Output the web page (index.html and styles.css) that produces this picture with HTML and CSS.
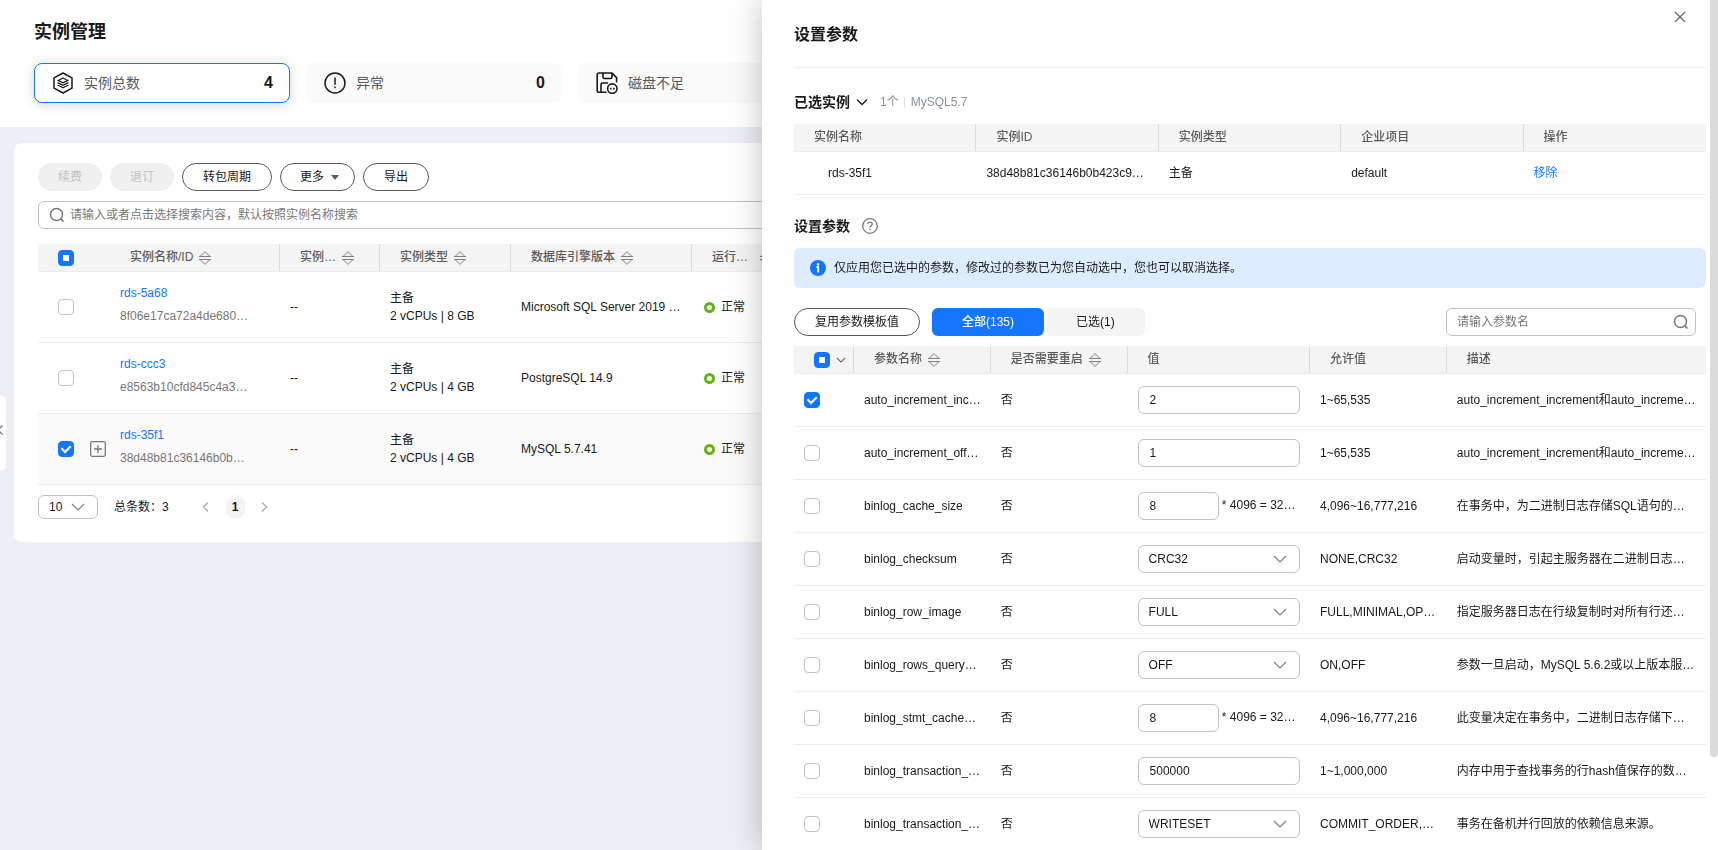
FILE: index.html
```html
<!DOCTYPE html>
<html lang="zh-CN">
<head>
  <meta charset="UTF-8">
  <meta name="viewport" content="width=device-width, initial-scale=1.0">
  <title>实例管理</title>
  <link rel="stylesheet" href="styles.css">
</head>
<body>

  <!-- Shared icons -->
  <svg class="sprite" aria-hidden="true">
    <symbol id="sort" viewBox="0 0 12 14">
      <path d="M1 5.5 L6 0.7 L11 5.5 M1 8.5 L6 13.3 L11 8.5" fill="none" stroke="#b0b0b0" stroke-width="1.2"/>
      <path d="M0 5.5 H12 M0 8.5 H12" fill="none" stroke="#808080"/>
    </symbol>
    <symbol id="search" viewBox="0 0 16 16">
      <circle cx="7.5" cy="7.5" r="6" fill="none" stroke="currentColor" stroke-width="1.5"/>
      <path d="M11.8 11.8 L14.5 14.5" fill="none" stroke="currentColor" stroke-width="1.7"/>
    </symbol>
    <symbol id="down" viewBox="0 0 12 12">
      <path d="M1 3.5 L6 8.5 L11 3.5" fill="none" stroke="currentColor" stroke-width="1.3"/>
    </symbol>
  </svg>

  <main class="page">
    <header class="page-header">
      <h1>实例管理</h1>
      <div class="stats">
        <div class="stat active">
          <svg class="stat-icon" viewBox="0 0 22 22" fill="none" stroke="#191919">
            <path d="M11 1 L20 5.8 V16.2 L11 21 L2 16.2 V5.8 Z" stroke-width="1.5" stroke-linejoin="round"/>
            <path d="M11 6 L15.8 8.4 L11 10.8 L6.2 8.4 Z M5.6 10.6 L11 13.4 L16.4 10.6 M5.6 13 L11 15.8 L16.4 13" stroke-width="1.2"/>
          </svg>
          <span>实例总数</span>
          <b>4</b>
        </div>
        <div class="stat">
          <svg class="stat-icon" viewBox="0 0 22 22" fill="none" stroke="#191919" stroke-width="1.5">
            <circle cx="11" cy="11" r="10"/>
            <path d="M11 5.5 V12.8 M11 14.6 V16.2"/>
          </svg>
          <span>异常</span>
          <b>0</b>
        </div>
        <div class="stat">
          <svg class="stat-icon" viewBox="0 0 22 22" fill="none" stroke="#191919" stroke-width="1.6">
            <path d="M10.5 20.2 H3 Q1.2 20.2 1.2 18.4 V2.8 Q1.2 1 3 1 H16 L20.6 5.6 V10.5"/>
            <path d="M7 1 V5 Q7 6.5 8.5 6.5 H14.5 Q16 6.5 16 5 V1"/>
            <path d="M5 20 V12.5 Q5 11 6.5 11 H12"/>
            <circle cx="16.3" cy="16.6" r="4.7"/>
            <path d="M14 16.6 H15.6 M17 16.6 H18.6"/>
          </svg>
          <span>磁盘不足</span>
        </div>
      </div>
    </header>

    <section class="panel">
      <div class="toolbar">
        <button class="btn" disabled>续费</button>
        <button class="btn" disabled>退订</button>
        <button class="btn">转包周期</button>
        <button class="btn more">更多 <i class="caret"></i></button>
        <button class="btn">导出</button>
      </div>
      <div class="searchbar">
        <svg class="icon16"><use href="#search"/></svg>
        <input type="text" aria-label="搜索" placeholder="请输入或者点击选择搜索内容，默认按照实例名称搜索">
      </div>

      <table class="instances">
        <colgroup>
          <col class="w-check"><col class="w-name"><col class="w-note"><col class="w-type"><col class="w-engine"><col class="w-state"><col>
        </colgroup>
        <thead>
          <tr>
            <th class="check"><input type="checkbox" class="partial" aria-label="全选"></th>
            <th>实例名称/ID<svg class="sort"><use href="#sort"/></svg></th>
            <th>实例…<svg class="sort"><use href="#sort"/></svg></th>
            <th>实例类型<svg class="sort"><use href="#sort"/></svg></th>
            <th>数据库引擎版本<svg class="sort"><use href="#sort"/></svg></th>
            <th class="state">运行…<svg class="sort"><use href="#sort"/></svg></th>
            <th></th>
          </tr>
        </thead>
        <tbody>
          <tr>
            <td class="check"><input type="checkbox" aria-label="rds-5a68"></td>
            <td class="name"><a href="#">rds-5a68</a><span>8f06e17ca72a4de680…</span></td>
            <td>--</td>
            <td>主备<br>2 vCPUs | 8 GB</td>
            <td>Microsoft SQL Server 2019 …</td>
            <td><i class="dot"></i>正常</td>
            <td></td>
          </tr>
          <tr>
            <td class="check"><input type="checkbox" aria-label="rds-ccc3"></td>
            <td class="name"><a href="#">rds-ccc3</a><span>e8563b10cfd845c4a3…</span></td>
            <td>--</td>
            <td>主备<br>2 vCPUs | 4 GB</td>
            <td>PostgreSQL 14.9</td>
            <td><i class="dot"></i>正常</td>
            <td></td>
          </tr>
          <tr class="selected">
            <td class="check">
              <div class="check-row">
                <input type="checkbox" aria-label="rds-35f1" checked>
                <button class="expand" aria-label="展开">
                  <svg viewBox="0 0 16 16" fill="none" stroke="#777" stroke-width="1.3"><rect x="0.7" y="0.7" width="14.6" height="14.6" rx="1.5"/><path d="M4 8 H12 M8 4 V12"/></svg>
                </button>
              </div>
            </td>
            <td class="name"><a href="#">rds-35f1</a><span>38d48b81c36146b0b…</span></td>
            <td>--</td>
            <td>主备<br>2 vCPUs | 4 GB</td>
            <td>MySQL 5.7.41</td>
            <td><i class="dot"></i>正常</td>
            <td></td>
          </tr>
        </tbody>
      </table>

      <div class="pager">
        <select aria-label="每页条数"><option>10</option></select>
        <span class="total">总条数：3</span>
        <button class="page-btn" aria-label="上一页"><svg viewBox="0 0 12 12"><path d="M8 1.5 L3.5 6 L8 10.5"/></svg></button>
        <button class="page-btn current">1</button>
        <button class="page-btn" aria-label="下一页"><svg viewBox="0 0 12 12"><path d="M4 1.5 L8.5 6 L4 10.5"/></svg></button>
      </div>
    </section>
  </main>

  <button class="side-handle" aria-label="收起">
    <svg viewBox="0 0 3 12"><path d="M2.5 1.5 L-2 6 L2.5 10.5" fill="none" stroke="#777" stroke-width="1.3"/></svg>
  </button>

  <!-- Parameter drawer -->
  <aside class="drawer">
    <button class="close" aria-label="关闭">
      <svg viewBox="0 0 12 12"><path d="M1 1 L11 11 M11 1 L1 11" fill="none" stroke="#6b6b6b" stroke-width="1.4"/></svg>
    </button>
    <div class="drawer-body">
      <h2>设置参数</h2>

      <div class="section-title">
        <h3>已选实例</h3>
        <svg class="fold"><use href="#down"/></svg>
        <span class="summary">1个</span><i class="bar"></i><span class="summary">MySQL5.7</span>
      </div>
      <table class="chosen">
        <thead>
          <tr><th>实例名称</th><th>实例ID</th><th>实例类型</th><th>企业项目</th><th>操作</th></tr>
        </thead>
        <tbody>
          <tr><td>rds-35f1</td><td>38d48b81c36146b0b423c9…</td><td>主备</td><td>default</td><td><a href="#">移除</a></td></tr>
        </tbody>
      </table>

      <div class="section-title second">
        <h3>设置参数</h3>
        <svg class="help" viewBox="0 0 16 16" fill="none" stroke="#777" stroke-width="1.3">
          <circle cx="8" cy="8" r="7.3"/>
          <path d="M5.8 6.3 Q5.8 4.2 8 4.2 Q10.2 4.2 10.2 6.1 Q10.2 7.2 9 7.9 Q8 8.5 8 9.6 M8 10.8 V12.1"/>
        </svg>
      </div>

      <div class="alert">
        <svg class="icon16" viewBox="0 0 16 16">
          <circle cx="8" cy="8" r="8" fill="#1476ff"/>
          <circle cx="8" cy="4.3" r="1.2" fill="#fff"/>
          <path d="M6.4 7 H8.2 V12.4" fill="none" stroke="#fff" stroke-width="1.8"/>
        </svg>
        仅应用您已选中的参数，修改过的参数已为您自动选中，您也可以取消选择。
      </div>

      <div class="param-bar">
        <button class="btn">复用参数模板值</button>
        <div class="tabs">
          <button class="tab active">全部(135)</button>
          <button class="tab">已选(1)</button>
        </div>
        <div class="param-search">
          <input type="text" aria-label="参数名" placeholder="请输入参数名">
          <svg class="icon16"><use href="#search"/></svg>
        </div>
      </div>

      <table class="params">
        <colgroup>
          <col class="p-check"><col class="p-name"><col class="p-restart"><col class="p-value"><col class="p-allow"><col>
        </colgroup>
        <thead>
          <tr>
            <th class="check">
              <div class="check-row">
                <input type="checkbox" class="partial" aria-label="全选">
                <svg class="mini"><use href="#down"/></svg>
              </div>
            </th>
            <th>参数名称<svg class="sort"><use href="#sort"/></svg></th>
            <th>是否需要重启<svg class="sort"><use href="#sort"/></svg></th>
            <th>值</th>
            <th>允许值</th>
            <th>描述</th>
          </tr>
        </thead>
        <tbody>
          <tr>
            <td><input type="checkbox" aria-label="选择参数" checked></td>
            <td>auto_increment_inc…</td>
            <td>否</td>
            <td><input type="text" aria-label="值" value="2"></td>
            <td>1~65,535</td>
            <td>auto_increment_increment和auto_increme…</td>
          </tr>
          <tr>
            <td><input type="checkbox" aria-label="选择参数"></td>
            <td>auto_increment_off…</td>
            <td>否</td>
            <td><input type="text" aria-label="值" value="1"></td>
            <td>1~65,535</td>
            <td>auto_increment_increment和auto_increme…</td>
          </tr>
          <tr>
            <td><input type="checkbox" aria-label="选择参数"></td>
            <td>binlog_cache_size</td>
            <td>否</td>
            <td><div class="multi"><input type="text" aria-label="值" value="8"><span>* 4096 = 32…</span></div></td>
            <td>4,096~16,777,216</td>
            <td>在事务中，为二进制日志存储SQL语句的…</td>
          </tr>
          <tr>
            <td><input type="checkbox" aria-label="选择参数"></td>
            <td>binlog_checksum</td>
            <td>否</td>
            <td><select aria-label="值"><option>CRC32</option></select></td>
            <td>NONE,CRC32</td>
            <td>启动变量时，引起主服务器在二进制日志…</td>
          </tr>
          <tr>
            <td><input type="checkbox" aria-label="选择参数"></td>
            <td>binlog_row_image</td>
            <td>否</td>
            <td><select aria-label="值"><option>FULL</option></select></td>
            <td>FULL,MINIMAL,OP…</td>
            <td>指定服务器日志在行级复制时对所有行还…</td>
          </tr>
          <tr>
            <td><input type="checkbox" aria-label="选择参数"></td>
            <td>binlog_rows_query…</td>
            <td>否</td>
            <td><select aria-label="值"><option>OFF</option></select></td>
            <td>ON,OFF</td>
            <td>参数一旦启动，MySQL 5.6.2或以上版本服…</td>
          </tr>
          <tr>
            <td><input type="checkbox" aria-label="选择参数"></td>
            <td>binlog_stmt_cache…</td>
            <td>否</td>
            <td><div class="multi"><input type="text" aria-label="值" value="8"><span>* 4096 = 32…</span></div></td>
            <td>4,096~16,777,216</td>
            <td>此变量决定在事务中，二进制日志存储下…</td>
          </tr>
          <tr>
            <td><input type="checkbox" aria-label="选择参数"></td>
            <td>binlog_transaction_…</td>
            <td>否</td>
            <td><input type="text" aria-label="值" value="500000"></td>
            <td>1~1,000,000</td>
            <td>内存中用于查找事务的行hash值保存的数…</td>
          </tr>
          <tr>
            <td><input type="checkbox" aria-label="选择参数"></td>
            <td>binlog_transaction_…</td>
            <td>否</td>
            <td><select aria-label="值"><option>WRITESET</option></select></td>
            <td>COMMIT_ORDER,…</td>
            <td>事务在备机并行回放的依赖信息来源。</td>
          </tr>
        </tbody>
      </table>
    </div>
    <div class="scrollbar"></div>
  </aside>

</body>
</html>
```
FILE: styles.css
```css
* {
  box-sizing: border-box;
}

body {
  margin: 0;
  height: 100vh;
  overflow: hidden;
  background: #eeeff5;
  color: #191919;
  font: 12px/18px "Liberation Sans", "Noto Sans CJK SC", sans-serif;
}

button,
input,
select {
  font: inherit;
  color: inherit;
  margin: 0;
}

button {
  cursor: pointer;
}

a {
  color: #1476ff;
  text-decoration: none;
}

h1,
h2,
h3 {
  margin: 0;
}

.sprite {
  display: none;
}

.icon16 {
  width: 16px;
  height: 16px;
  flex: none;
  color: #777;
}

/* Page header */
.page-header {
  min-height: 127px;
  padding: 19px 34px 24px;
  background: #fff;
}

h1 {
  font-size: 18px;
  line-height: 26px;
}

.stats {
  display: flex;
  gap: 16px;
  margin-top: 18px;
}

.stat {
  flex: 0 0 256px;
  height: 40px;
  display: flex;
  align-items: center;
  gap: 10px;
  padding: 0 17px 0 18px;
  border-radius: 8px;
  background: #fafafa;
  font-size: 14px;
  color: #595959;
}

.stat.active {
  background: #fff;
  border: 1px solid #1476ff;
  box-shadow: 0 2px 12px rgba(0, 0, 0, 0.16);
  padding: 0 16px 0 17px;
}

.stat b {
  margin-left: auto;
  font-size: 16px;
  color: #191919;
}

.stat-icon {
  width: 22px;
  height: 22px;
}

/* Instance list */
.panel {
  margin: 16px 14px;
  padding: 20px 24px 23px;
  background: #fff;
  border-radius: 8px;
}

.toolbar {
  display: flex;
  gap: 8px;
  margin-bottom: 10px;
}

.btn {
  display: flex;
  align-items: center;
  gap: 8px;
  height: 28px;
  padding: 0 20px;
  border: 1px solid #595959;
  border-radius: 14px;
  background: #fff;
  white-space: nowrap;
}

.btn:disabled {
  border: 0;
  background: #f0f0f0;
  color: #c2c2c2;
}

.btn.more {
  gap: 7px;
  padding: 0 15px 0 19px;
}

.caret {
  border: 4px solid transparent;
  border-top: 5px solid #595959;
  border-bottom: 0;
}

.searchbar {
  display: flex;
  align-items: center;
  gap: 5px;
  height: 28px;
  padding: 0 10px;
  margin-bottom: 15px;
  border: 1px solid #c2c2c2;
  border-radius: 6px;
}

.searchbar input {
  flex: 1;
  border: 0;
  padding: 0;
  outline: none;
  background: none;
}

::placeholder {
  color: #777;
  opacity: 1;
}

/* Tables */
table {
  width: 100%;
  table-layout: fixed;
  border-collapse: separate;
  border-spacing: 0;
}

th {
  height: 28px;
  padding: 0 0 2px 20px;
  background: #f4f4f4;
  border-bottom: 1px solid #ececec;
  color: #595959;
  font-weight: 500;
  text-align: left;
  white-space: nowrap;
  /* column divider that stops above the bottom border */
  background-image: linear-gradient(#dbdbdb, #dbdbdb);
  background-size: 1px 100%;
  background-position: right top;
  background-repeat: no-repeat;
}

th:last-child {
  background-image: none;
}

th.check {
  padding-bottom: 0;
}

td {
  padding: 0 10px;
  border-bottom: 1px solid #ececec;
  white-space: nowrap;
}

.sort {
  width: 12px;
  height: 14px;
  margin-left: 6px;
  vertical-align: -4px;
}

.w-check { width: 72px; }
.w-name { width: 170px; }
.w-note { width: 100px; }
.w-type { width: 131px; }
.w-engine { width: 181px; }
.w-state { width: 110px; }

.instances th.check {
  background-image: none;
}

.state .sort {
  margin-left: 12px;
}

.instances .check {
  padding: 0 0 0 20px;
}

.instances td {
  height: 71px;
}

.selected td {
  background: #fafafa;
}

.check-row {
  display: flex;
  align-items: center;
  gap: 16px;
}

.expand {
  width: 16px;
  height: 16px;
  padding: 0;
  border: 0;
  background: none;
}

.expand svg,
.close svg,
.page-btn svg {
  display: block;
}

.name a,
.name span {
  display: block;
  margin-bottom: 5px;
}

.name span {
  color: #777;
}

.dot {
  display: inline-block;
  width: 11px;
  height: 11px;
  margin: 0 6px 0 2px;
  border: 3px solid #62b313;
  border-radius: 50%;
  vertical-align: middle;
}

/* Form controls */
input[type="checkbox"] {
  appearance: none;
  display: block;
  width: 16px;
  height: 16px;
  border: 1px solid #c2c2c2;
  border-radius: 4px;
  background: #fff center / 16px no-repeat;
}

input[type="checkbox"]:checked {
  border-color: #1476ff;
  background-color: #1476ff;
  background-image: url("data:image/svg+xml,%3Csvg xmlns='http://www.w3.org/2000/svg' viewBox='0 0 16 16'%3E%3Cpath d='M3.5 7.3 L7 11 L12.8 5.2' fill='none' stroke='white' stroke-width='2'/%3E%3C/svg%3E");
}

input[type="checkbox"].partial {
  border-color: #1476ff;
  background-color: #1476ff;
  background-image: linear-gradient(#fff, #fff);
  background-size: 6px 6px;
}

input[type="text"] {
  min-width: 0;
}

select {
  appearance: none;
  border: 1px solid #c2c2c2;
  border-radius: 6px;
  background: #fff url("data:image/svg+xml,%3Csvg xmlns='http://www.w3.org/2000/svg' viewBox='0 0 14 14'%3E%3Cpath d='M1 4 L7 10 L13 4' fill='none' stroke='%23808080' stroke-width='1.2'/%3E%3C/svg%3E") right 12px center / 14px no-repeat;
}

/* Pagination */
.pager {
  display: flex;
  align-items: center;
  margin-top: 10px;
}

.pager select {
  width: 60px;
  height: 24px;
  padding: 0 10px;
}

.total {
  margin: 0 28px 0 16px;
}

.page-btn {
  display: flex;
  align-items: center;
  justify-content: center;
  width: 19px;
  height: 24px;
  margin-right: 10px;
  padding: 0;
  border: 0;
  border-radius: 10px;
  background: none;
}

.page-btn.current {
  background: #f4f4f4;
  font-weight: bold;
}

.page-btn svg {
  width: 12px;
  height: 12px;
  fill: none;
  stroke: #adadad;
  stroke-width: 1.4;
}

.side-handle {
  position: absolute;
  left: 0;
  top: 395px;
  width: 6px;
  height: 76px;
  padding: 0 0 6px;
  display: flex;
  align-items: center;
  border: 0;
  border-radius: 0 8px 8px 0;
  background: #fff;
}

.side-handle svg {
  width: 3px;
  height: 12px;
}

/* Drawer */
.drawer {
  position: fixed;
  top: 0;
  bottom: 0;
  left: 762px;
  right: 0;
  display: flex;
  overflow: hidden;
  background: #fff;
  box-shadow: 0 0 30px rgba(0, 0, 0, 0.25);
}

.drawer-body {
  flex: 1;
  min-width: 0;
  padding: 0 4px 0 32px;
}

.scrollbar {
  flex: none;
  width: 8px;
  height: 757px;
  border-radius: 0 0 4px 4px;
  background: #dbdbdb;
}

.close {
  position: absolute;
  top: 11px;
  right: 32px;
  width: 12px;
  height: 12px;
  padding: 0;
  border: 0;
  background: none;
}

h2 {
  padding: 23px 0 20px;
  border-bottom: 1px solid #ececec;
  font-size: 16px;
  line-height: 24px;
}

h3 {
  font-size: 14px;
  line-height: 22px;
}

.section-title {
  display: flex;
  align-items: center;
  margin: 23px 0 11px;
}

.section-title.second {
  margin: 20px 0 11px;
}

.fold {
  width: 12px;
  height: 12px;
  margin: 0 12px 0 6px;
}

.summary {
  color: #8a8e99;
}

.bar {
  width: 1px;
  height: 11px;
  margin: 0 6px 0 5px;
  background: #dfe1e6;
}

.help {
  width: 16px;
  height: 16px;
  margin-left: 12px;
}

.chosen td {
  height: 43px;
}

.chosen td:first-child {
  padding-left: 34px;
}

.alert {
  display: flex;
  align-items: center;
  gap: 8px;
  min-height: 40px;
  padding: 0 16px;
  border-radius: 6px;
  background: #deecff;
}

.param-bar {
  display: flex;
  gap: 12px;
  margin: 20px 10px 10px 0;
}

.tabs {
  display: flex;
  gap: 2px;
}

.tab {
  height: 28px;
  padding: 0 30px;
  border: 0;
  border-radius: 6px;
  background: #f4f4f4;
}

.tab.active {
  background: #1476ff;
  color: #fff;
  font-weight: 500;
}

.param-search {
  display: flex;
  align-items: center;
  width: 250px;
  height: 28px;
  margin-left: auto;
  padding: 0 6px 0 10px;
  border: 1px solid #c2c2c2;
  border-radius: 6px;
}

.param-search input {
  flex: 1;
  border: 0;
  padding: 0;
  outline: none;
}

.p-check { width: 60px; }
.p-name { width: 15%; }
.p-restart { width: 15%; }
.p-value { width: 20%; }
.p-allow { width: 15%; }

.params td {
  height: 53px;
}

.params .check-row {
  gap: 6px;
}

.mini {
  width: 10px;
  height: 10px;
  color: #595959;
}

.params td input[type="text"],
.params td select {
  display: block;
  width: 100%;
  height: 28px;
  padding: 0 10px;
  border: 1px solid #c2c2c2;
  border-radius: 6px;
}

.params td input[type="text"] {
  padding: 0 11px;
}

.multi {
  display: flex;
  gap: 3px;
}

.params .multi input[type="text"] {
  width: 50%;
}

.multi span {
  padding-top: 4px;
}
```
